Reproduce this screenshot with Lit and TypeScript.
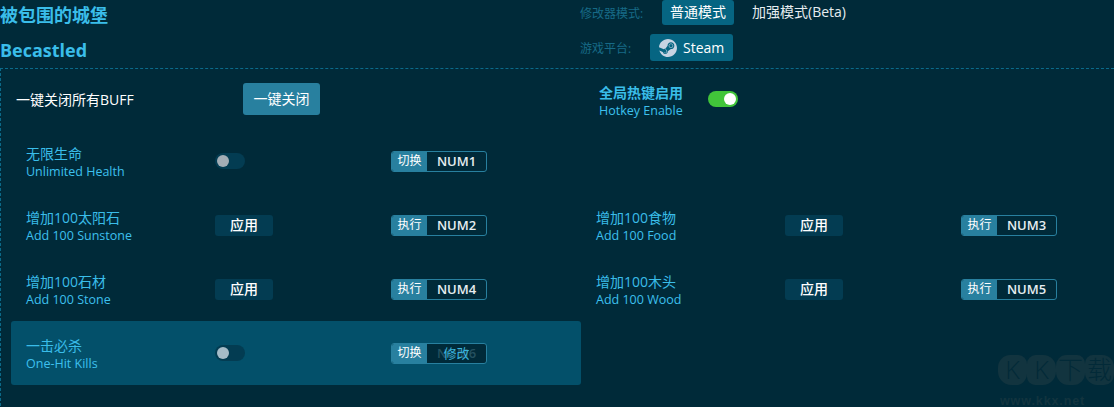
import { LitElement, html, css, svg } from 'lit';
import { customElement } from 'lit/decorators.js';
import { classMap } from 'lit/directives/class-map.js';

const steamIcon = svg`<path fill="#c6d4e3" d="M11.979 0C5.678 0 .511 4.86.022 11.037l6.432 2.658c.545-.371 1.203-.59 1.912-.59.063 0 .125.004.188.006l2.861-4.142V8.91c0-2.495 2.028-4.524 4.524-4.524 2.494 0 4.524 2.031 4.524 4.527s-2.03 4.525-4.524 4.525h-.105l-4.076 2.911c0 .052.004.105.004.159 0 1.875-1.515 3.396-3.39 3.396-1.635 0-3.016-1.173-3.331-2.727L.436 15.27C1.862 20.307 6.486 24 11.979 24c6.627 0 11.999-5.373 11.999-12S18.605 0 11.979 0zM7.54 18.21l-1.473-.61c.262.543.714.999 1.314 1.25 1.297.539 2.793-.076 3.332-1.375.263-.63.264-1.319.005-1.949s-.75-1.121-1.377-1.383c-.624-.26-1.29-.249-1.878-.03l1.523.63c.956.4 1.409 1.5 1.009 2.455-.397.957-1.497 1.41-2.454 1.012H7.54zm11.415-9.303c0-1.662-1.353-3.015-3.015-3.015-1.665 0-3.015 1.353-3.015 3.015 0 1.665 1.35 3.015 3.015 3.015 1.663 0 3.015-1.35 3.015-3.015zm-5.273-.005c0-1.252 1.013-2.266 2.265-2.266 1.249 0 2.266 1.014 2.266 2.266 0 1.251-1.017 2.265-2.266 2.265-1.253 0-2.265-1.014-2.265-2.265z"/>`;

type Cheat = {
  zh: string;
  en: string;
  kind: 'toggle' | 'apply';
  key: string;
  hover?: boolean;
};

const cheats: (Cheat | null)[] = [
  { zh: '无限生命', en: 'Unlimited Health', kind: 'toggle', key: 'NUM1' },
  null,
  { zh: '增加100太阳石', en: 'Add 100 Sunstone', kind: 'apply', key: 'NUM2' },
  { zh: '增加100食物', en: 'Add 100 Food', kind: 'apply', key: 'NUM3' },
  { zh: '增加100石材', en: 'Add 100 Stone', kind: 'apply', key: 'NUM4' },
  { zh: '增加100木头', en: 'Add 100 Wood', kind: 'apply', key: 'NUM5' },
  { zh: '一击必杀', en: 'One-Hit Kills', kind: 'toggle', key: 'NUM6', hover: true },
];

@customElement('app-root')
export class AppRoot extends LitElement {
  static styles = css`
    :host {
      display: block;
      position: relative;
      width: 1114px;
      height: 407px;
      overflow: hidden;
      background: #002a39;
      color: #fff;
      font-family: 'Open Sans', 'Noto Sans CJK SC', sans-serif;
      font-size: 14px;
    }
    .header {
      display: flex;
      height: 68px;
      box-sizing: border-box;
    }
    .titles {
      width: 580px;
      color: #3abde9;
      font-size: 18px;
      font-weight: 700;
      line-height: 24px;
    }
    .titles div:first-child {
      margin-top: 3px;
    }
    .titles div + div {
      margin-top: 11px;
    }
    .modes {
      display: flex;
      flex-direction: column;
    }
    .mode-row {
      display: flex;
      align-items: center;
    }
    .mode-row + .mode-row {
      margin-top: 9px;
    }
    .mode-label {
      font-size: 12px;
      color: #176a87;
    }
    .first-label {
      width: 82px;
    }
    .second-label {
      width: 70px;
    }
    .mode {
      height: 25px;
      line-height: 24px;
      padding: 0 8px;
      border-radius: 3px;
      margin-right: 18px;
      font-size: 14px;
    }
    .mode.on {
      background: #066582;
    }
    .mode.plain {
      padding: 0;
      color: #e6edf0;
    }
    .platform {
      display: flex;
      align-items: center;
      gap: 6px;
      height: 27px;
      padding: 0 9px;
      border-radius: 3px;
      background: #066582;
      font-size: 14px;
      font-weight: 500;
    }
    .platform svg {
      width: 18px;
      height: 18px;
    }
    .body {
      border-top: 1px dashed #0b6a8a;
      border-left: 1px dashed #0b6a8a;
      height: 338px;
      box-sizing: border-box;
      padding-left: 10px;
    }
    .top-bar {
      display: grid;
      grid-template-columns: 570px 570px;
      height: 60px;
    }
    .close-all {
      display: flex;
      align-items: center;
      padding-left: 5px;
    }
    .close-text {
      width: 227px;
    }
    .close-btn {
      width: 77px;
      height: 32px;
      line-height: 31px;
      text-align: center;
      background: #28809f;
      border-radius: 3px;
      margin-top: -1px;
    }
    .hotkey-enable {
      display: flex;
      align-items: center;
      padding-left: 18px;
    }
    .hotkey-enable b {
      font-weight: 700;
      font-size: 14px;
    }
    .names {
      display: flex;
      flex-direction: column;
      color: #3abde9;
      padding-top: 4px;
    }
    .names span {
      font-size: 14px;
      line-height: 18px;
    }
    .names small {
      font-size: 12.5px;
      line-height: 18px;
      color: #3dc0ee;
    }
    .hotkey-names {
      width: 109px;
      padding-top: 3px;
    }
    .grid {
      display: grid;
      grid-template-columns: 570px 570px;
      grid-auto-rows: 64px;
    }
    .row {
      display: flex;
      align-items: center;
      padding-left: 15px;
      border-radius: 3px;
    }
    .row.hover {
      background: #03506a;
    }
    .row .names {
      width: 189px;
    }
    .control {
      width: 176px;
      display: flex;
    }
    .switch {
      width: 30px;
      height: 16px;
      border-radius: 8px;
      background: #033c52;
      display: flex;
      align-items: center;
      padding: 0 2px;
      box-sizing: border-box;
    }
    .switch i {
      width: 12px;
      height: 12px;
      border-radius: 50%;
      background: #a3adb5;
    }
    .hover .switch i {
      background: #a5bcc8;
    }
    .switch.on {
      background: #41c53a;
      justify-content: flex-end;
    }
    .switch.on i {
      background: #fff;
    }
    .apply {
      width: 58px;
      height: 21px;
      line-height: 20px;
      text-align: center;
      background: #033c52;
      border-radius: 3px;
      font-size: 14px;
      font-weight: 500;
    }
    .hotkey {
      display: flex;
      width: 96px;
      height: 21px;
      box-sizing: border-box;
      border: 1px solid #28809f;
      border-radius: 3px;
      overflow: hidden;
      position: relative;
      background: #002a39;
    }
    .hotkey .action {
      width: 35px;
      background: #28809f;
      font-size: 12px;
      line-height: 17px;
      text-align: center;
      flex: none;
    }
    .hotkey .key {
      flex: 1;
      text-align: center;
      font-size: 13px;
      font-weight: 600;
      line-height: 19px;
      color: #e6edf0;
    }
    .hover .hotkey .key {
      color: #24505f;
    }
    .hotkey .edit {
      position: absolute;
      left: 35px;
      right: 0;
      top: 0;
      text-align: center;
      font-size: 13px;
      line-height: 19px;
      color: #3ab4dc;
    }
    .watermark {
      position: absolute;
      left: 998px;
      top: 355px;
      width: 116px;
    }
    .wm-logo {
      display: flex;
      justify-content: space-between;
    }
    .wm-logo span {
      width: 29px;
      height: 30px;
      line-height: 29px;
      font-size: 25px;
      font-weight: 300;
      text-align: center;
      background: #12343f;
      color: #022a38;
    }
    .wm-logo span:nth-child(1) {
      border-radius: 42% 30% 38% 46%;
    }
    .wm-logo span:nth-child(2) {
      border-radius: 30% 44% 46% 28%;
    }
    .wm-logo span:nth-child(3) {
      border-radius: 36% 28% 40% 44%;
    }
    .wm-logo span:nth-child(4) {
      border-radius: 28% 40% 34% 42%;
    }
    .wm-url {
      font-family: 'Liberation Sans', sans-serif;
      font-size: 12.5px;
      font-weight: 700;
      letter-spacing: 0.9px;
      margin: 9px 0 0 2px;
      line-height: 14px;
      color: #12343f;
    }
  `;

  private renderRow(c: Cheat | null) {
    if (!c) return html`<div></div>`;
    return html`
      <div class=${classMap({ row: true, hover: !!c.hover })}>
        <div class="names">
          <span>${c.zh}</span>
          <small>${c.en}</small>
        </div>
        <div class="control">
          ${c.kind === 'toggle'
            ? html`<div class="switch"><i></i></div>`
            : html`<div class="apply">应用</div>`}
        </div>
        <div class="hotkey">
          <div class="action">${c.kind === 'toggle' ? '切换' : '执行'}</div>
          <div class="key">${c.key}</div>
          ${c.hover ? html`<div class="edit">修改</div>` : ''}
        </div>
      </div>
    `;
  }

  render() {
    return html`
      <div class="header">
        <div class="titles">
          <div>被包围的城堡</div>
          <div>Becastled</div>
        </div>
        <div class="modes">
          <div class="mode-row">
            <div class="mode-label first-label">修改器模式:</div>
            <div class="mode on">普通模式</div>
            <div class="mode plain">加强模式(Beta)</div>
          </div>
          <div class="mode-row">
            <div class="mode-label second-label">游戏平台:</div>
            <div class="platform">
              <svg viewBox="0 0 24 24">${steamIcon}</svg>
              Steam
            </div>
          </div>
        </div>
      </div>
      <div class="body">
        <div class="top-bar">
          <div class="close-all">
            <div class="close-text">一键关闭所有BUFF</div>
            <div class="close-btn">一键关闭</div>
          </div>
          <div class="hotkey-enable">
            <div class="names hotkey-names">
              <b>全局热键启用</b>
              <small>Hotkey Enable</small>
            </div>
            <div class="switch on"><i></i></div>
          </div>
        </div>
        <div class="grid">${cheats.map((c) => this.renderRow(c))}</div>
      </div>
      <div class="watermark">
        <div class="wm-logo"><span>K</span><span>K</span><span>下</span><span>载</span></div>
        <div class="wm-url">www.kkx.net</div>
      </div>
    `;
  }
}
